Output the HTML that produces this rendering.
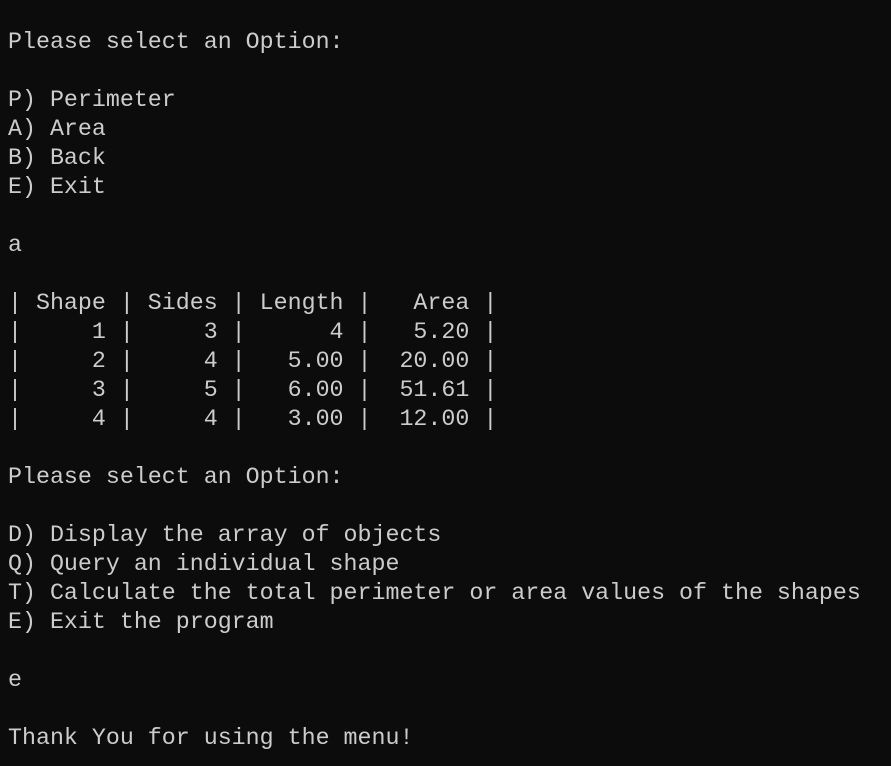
<!DOCTYPE html>
<html><head><meta charset="utf-8"><style>
html,body{margin:0;padding:0;background:#0c0c0c;width:891px;height:766px;overflow:hidden}
pre{margin:0;padding:28px 0 0 8px;font-family:"Liberation Mono","DejaVu Sans Mono",monospace;font-size:23.3px;line-height:29px;color:#cccccc}
</style></head><body><pre>Please select an Option:

P) Perimeter
A) Area
B) Back
E) Exit

a

| Shape | Sides | Length |   Area |
|     1 |     3 |      4 |   5.20 |
|     2 |     4 |   5.00 |  20.00 |
|     3 |     5 |   6.00 |  51.61 |
|     4 |     4 |   3.00 |  12.00 |

Please select an Option:

D) Display the array of objects
Q) Query an individual shape
T) Calculate the total perimeter or area values of the shapes
E) Exit the program

e

Thank You for using the menu!</pre></body></html>
